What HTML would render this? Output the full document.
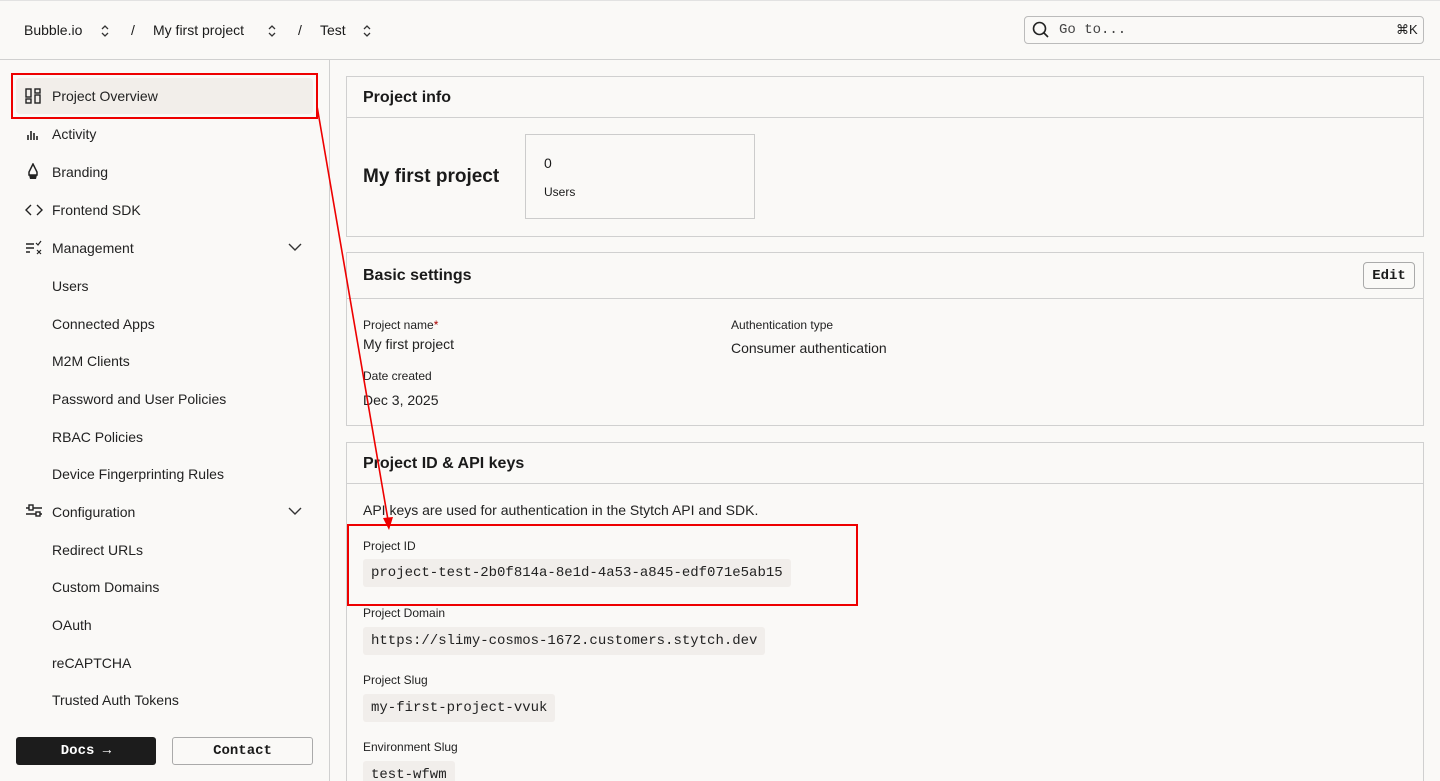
<!DOCTYPE html>
<html style="width:1440px;height:781px;overflow:hidden"><head><style>
*{box-sizing:border-box;margin:0;padding:0}
body{width:1440px;height:781px;overflow:hidden;background:#faf9f7;font-family:"Liberation Sans",sans-serif;color:#1a1a1a;position:relative}
.a{position:absolute}
.nav{position:absolute;left:52px;font-size:14px;color:#222}
.ic{position:absolute;left:25px}
.card{position:absolute;left:346px;width:1078px;border:1px solid #d0d0d0;background:#faf9f7}
.ch{height:41px;border-bottom:1px solid #d0d0d0;padding:12px 16px;font-size:16px;font-weight:bold}
.lbl{position:absolute;font-size:12px;color:#222}
.val{position:absolute;font-size:14px;color:#222}
.code{position:absolute;left:363px;height:28px;background:#f1eeeb;border-radius:3px;font-family:"Liberation Mono",monospace;font-size:14px;padding:6px 8px;color:#222}
.mono{font-family:"Liberation Mono",monospace}
</style></head><body>
<div class="a" style="left:0;top:0;width:1440px;height:60px;border-bottom:1px solid #d0d0d0;border-top:1px solid #e2e2e2"></div>
<div class="a" style="left:24px;top:22px;font-size:14px">Bubble.io</div>
<svg class="a" style="left:99px;top:23px" width="12" height="16" viewBox="0 0 12 16"><path d="M3 6l3-3 3 3M3 10l3 3 3-3" fill="none" stroke="#333" stroke-width="1.3"/></svg>
<div class="a" style="left:131px;top:22px;font-size:14px">/</div>
<div class="a" style="left:153px;top:22px;font-size:14px">My first project</div>
<svg class="a" style="left:266px;top:23px" width="12" height="16" viewBox="0 0 12 16"><path d="M3 6l3-3 3 3M3 10l3 3 3-3" fill="none" stroke="#333" stroke-width="1.3"/></svg>
<div class="a" style="left:298px;top:22px;font-size:14px">/</div>
<div class="a" style="left:320px;top:22px;font-size:14px">Test</div>
<svg class="a" style="left:361px;top:23px" width="12" height="16" viewBox="0 0 12 16"><path d="M3 6l3-3 3 3M3 10l3 3 3-3" fill="none" stroke="#333" stroke-width="1.3"/></svg>
<div class="a" style="left:1024px;top:16px;width:400px;height:28px;border:1px solid #bbb;border-radius:4px"></div>
<svg class="a" style="left:1031px;top:20px" width="20" height="20" viewBox="0 0 20 20"><circle cx="8.5" cy="8.5" r="6" fill="none" stroke="#222" stroke-width="1.6"/><path d="M13 13l4 4" stroke="#222" stroke-width="1.6"/></svg>
<div class="a mono" style="left:1059px;top:22px;font-size:14px;color:#444">Go to...</div>
<div class="a" style="left:1396px;top:22px;font-size:13px">⌘K</div>
<div class="a" style="left:329px;top:60px;width:1px;height:721px;background:#d0d0d0"></div>
<div class="a" style="left:16px;top:78px;width:297px;height:36px;background:#f2eeea;border-radius:4px"></div>
<div class="a" style="left:11px;top:73px;width:307px;height:46px;border:2px solid #e00"></div>
<svg class="ic" style="top:88px" width="16" height="16" viewBox="0 0 16 16"><g fill="none" stroke="#222" stroke-width="1.4"><rect x="1" y="1" width="5" height="8"/><rect x="1" y="11" width="5" height="4"/><rect x="10" y="1" width="5" height="4"/><rect x="10" y="7" width="5" height="8"/></g></svg>
<div class="nav" style="top:88px">Project Overview</div>
<svg class="ic" style="top:126px" width="16" height="16" viewBox="0 0 16 16"><path d="M3 14V9M6 14V5M9 14V7M12 14V10" stroke="#222" stroke-width="1.6"/></svg>
<div class="nav" style="top:126px">Activity</div>
<svg class="ic" style="top:163px" width="16" height="18" viewBox="0 0 16 18"><path d="M8 1L4 9v3h8V9z" fill="none" stroke="#222" stroke-width="1.5"/><path d="M4 12h8l-1 4H5z" fill="#222"/></svg>
<div class="nav" style="top:164px">Branding</div>
<svg class="ic" style="top:202px" width="18" height="16" viewBox="0 0 18 16"><path d="M6 3L1 8l5 5M12 3l5 5-5 5" fill="none" stroke="#222" stroke-width="1.4"/></svg>
<div class="nav" style="top:202px">Frontend SDK</div>
<svg class="ic" style="top:240px" width="18" height="16" viewBox="0 0 18 16"><path d="M1 4h8M1 8h8M1 12h4" stroke="#222" stroke-width="1.4"/><path d="M11 3l2 2 3-4M12 10l4 4M16 10l-4 4" fill="none" stroke="#222" stroke-width="1.2"/></svg>
<div class="nav" style="top:240px">Management</div>
<svg class="a" style="left:288px;top:242px" width="14" height="10" viewBox="0 0 14 10"><path d="M1 2l6 6 6-6" fill="none" stroke="#333" stroke-width="1.4"/></svg>
<div class="nav" style="top:278px">Users</div>
<div class="nav" style="top:316px">Connected Apps</div>
<div class="nav" style="top:353px">M2M Clients</div>
<div class="nav" style="top:391px">Password and User Policies</div>
<div class="nav" style="top:429px">RBAC Policies</div>
<div class="nav" style="top:466px">Device Fingerprinting Rules</div>
<svg class="ic" style="top:503px" width="18" height="16" viewBox="0 0 18 16"><path d="M1 5h16M1 11h16" stroke="#222" stroke-width="1.4"/><rect x="4" y="2" width="4" height="5" fill="#faf9f7" stroke="#222" stroke-width="1.4"/><rect x="11" y="9" width="4" height="4" fill="#faf9f7" stroke="#222" stroke-width="1.4"/></svg>
<div class="nav" style="top:504px">Configuration</div>
<svg class="a" style="left:288px;top:506px" width="14" height="10" viewBox="0 0 14 10"><path d="M1 2l6 6 6-6" fill="none" stroke="#333" stroke-width="1.4"/></svg>
<div class="nav" style="top:542px">Redirect URLs</div>
<div class="nav" style="top:579px">Custom Domains</div>
<div class="nav" style="top:617px">OAuth</div>
<div class="nav" style="top:655px">reCAPTCHA</div>
<div class="nav" style="top:692px">Trusted Auth Tokens</div>
<div class="a mono" style="left:16px;top:737px;width:140px;height:28px;background:#1c1c1c;color:#fff;border-radius:3px;font-size:14px;font-weight:bold;text-align:center;line-height:28px">Docs →</div>
<div class="a mono" style="left:172px;top:737px;width:141px;height:28px;border:1px solid #aaa;border-radius:3px;font-size:14px;font-weight:bold;text-align:center;line-height:26px">Contact</div>
<div class="card" style="top:76px;height:161px"><div class="ch">Project info</div></div>
<div class="a" style="left:363px;top:166px;font-size:19px;font-weight:bold">My first project</div>
<div class="a" style="left:525px;top:134px;width:230px;height:85px;border:1px solid #ccc"></div>
<div class="a" style="left:544px;top:155px;font-size:14px">0</div>
<div class="a" style="left:544px;top:185px;font-size:12px">Users</div>
<div class="card" style="top:252px;height:174px"><div class="ch" style="height:46px;padding-top:14px">Basic settings</div></div>
<div class="a mono" style="left:1363px;top:262px;width:52px;height:27px;border:1px solid #aaa;border-radius:4px;font-size:14px;font-weight:bold;text-align:center;line-height:27px">Edit</div>
<div class="lbl" style="left:363px;top:318px">Project name<span style="color:#a00">*</span></div>
<div class="val" style="left:363px;top:336px">My first project</div>
<div class="lbl" style="left:731px;top:318px">Authentication type</div>
<div class="val" style="left:731px;top:340px">Consumer authentication</div>
<div class="lbl" style="left:363px;top:369px">Date created</div>
<div class="val" style="left:363px;top:392px">Dec 3, 2025</div>
<div class="card" style="top:442px;height:339px;border-bottom:none"><div class="ch">Project ID &amp; API keys</div></div>
<div class="val" style="left:363px;top:502px">API keys are used for authentication in the Stytch API and SDK.</div>
<div class="lbl" style="left:363px;top:539px">Project ID</div>
<div class="code" style="top:559px">project-test-2b0f814a-8e1d-4a53-a845-edf071e5ab15</div>
<div class="a" style="left:347px;top:524px;width:511px;height:82px;border:2px solid #e00"></div>
<div class="lbl" style="left:363px;top:606px">Project Domain</div>
<div class="code" style="top:627px">https://slimy-cosmos-1672.customers.stytch.dev</div>
<div class="lbl" style="left:363px;top:673px">Project Slug</div>
<div class="code" style="top:694px">my-first-project-vvuk</div>
<div class="lbl" style="left:363px;top:740px">Environment Slug</div>
<div class="code" style="top:761px;height:20px;border-radius:3px 3px 0 0">test-wfwm</div>
<svg class="a" style="left:0;top:0" width="1440" height="781"><line x1="317" y1="106" x2="388" y2="520" stroke="#e00" stroke-width="1.6"/><path d="M383 518l6 12 4-13z" fill="#e00"/></svg>
</body></html>
